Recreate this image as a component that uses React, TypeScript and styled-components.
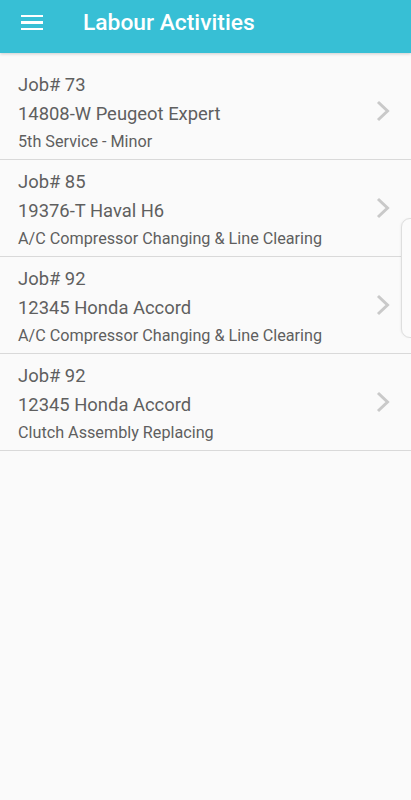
import React from "react"
import styled, { createGlobalStyle } from "styled-components"

const GlobalStyle = createGlobalStyle`
    html, body {
        margin: 0;
        padding: 0;
        background: #fafafa;
        font-family: Roboto, "Noto Sans", Arial, sans-serif;
    }
`;

const Screen = styled.div`
    position: relative;
    width: 411px;
    height: 800px;
    background: #fafafa;
    overflow: hidden;
`;
const Toolbar = styled.header`
    display: flex;
    align-items: center;
    height: 53px;
    background: #37bfd5;
    box-shadow: 0 1px 3px rgba(0, 0, 0, 0.18);
`;
const MenuButton = styled.div`
    display: flex;
    flex-direction: column;
    justify-content: space-between;
    width: 22px;
    height: 16px;
    margin: -8px 40px 0 21px;
    span {
        display: block;
        height: 2.4px;
        background: #fff;
    }
`;
const Title = styled.h1`
    margin: -8px 0 0;
    font-size: 22.8px;
    font-weight: 500;
    color: #fff;
`;
const List = styled.ul`
    list-style: none;
    margin: 0;
    padding: 10px 0 0;
`;
const Row = styled.li`
    display: flex;
    align-items: center;
    height: 96px;
    padding-left: 18px;
    border-bottom: 1px solid #d9d9d9;
`;
const Info = styled.div`
    flex: 1;
    align-self: flex-start;
    display: flex;
    flex-direction: column;
    color: #5f5f5f;
    padding-top: 7px;
`;
const JobNo = styled.div`
    font-size: 18.4px;
    line-height: 29px;
`;
const Vehicle = styled.div`
    font-size: 18.4px;
    line-height: 29px;
`;
const Service = styled.div`
    margin-top: 2px;
    font-size: 16.2px;
    line-height: 24px;
`;
const Chevron = styled.svg`
    width: 14px;
    height: 22px;
    margin-right: 21px;
    margin-top: 0;
`;
const EdgeHandle = styled.div`
    position: absolute;
    top: 218px;
    right: -10px;
    width: 18px;
    height: 118px;
    border: 1px solid #dedede;
    border-radius: 9px;
    background: #fbfbfb;
    box-shadow: -1px 0 2px rgba(0, 0, 0, 0.04);
`;

const jobs = [
    { no: 73, vehicle: "14808-W Peugeot Expert", service: "5th Service - Minor" },
    { no: 85, vehicle: "19376-T Haval H6", service: "A/C Compressor Changing & Line Clearing" },
    { no: 92, vehicle: "12345 Honda Accord", service: "A/C Compressor Changing & Line Clearing" },
    { no: 92, vehicle: "12345 Honda Accord", service: "Clutch Assembly Replacing" },
]

export default function App() {
    return (
        <Screen>
            <GlobalStyle />
            <Toolbar>
                <MenuButton><span /><span /><span /></MenuButton>
                <Title>Labour Activities</Title>
            </Toolbar>
            <List>
                {jobs.map((j, i) => (
                    <Row key={i}>
                        <Info>
                            <JobNo>Job# {j.no}</JobNo>
                            <Vehicle>{j.vehicle}</Vehicle>
                            <Service>{j.service}</Service>
                        </Info>
                        <Chevron viewBox="0 0 14 22">
                            <path d="M2 2 L11.5 11 L2 20" fill="none" stroke="#c9c9c9" strokeWidth="3" />
                        </Chevron>
                    </Row>
                ))}
            </List>
            <EdgeHandle />
        </Screen>
    )
}
